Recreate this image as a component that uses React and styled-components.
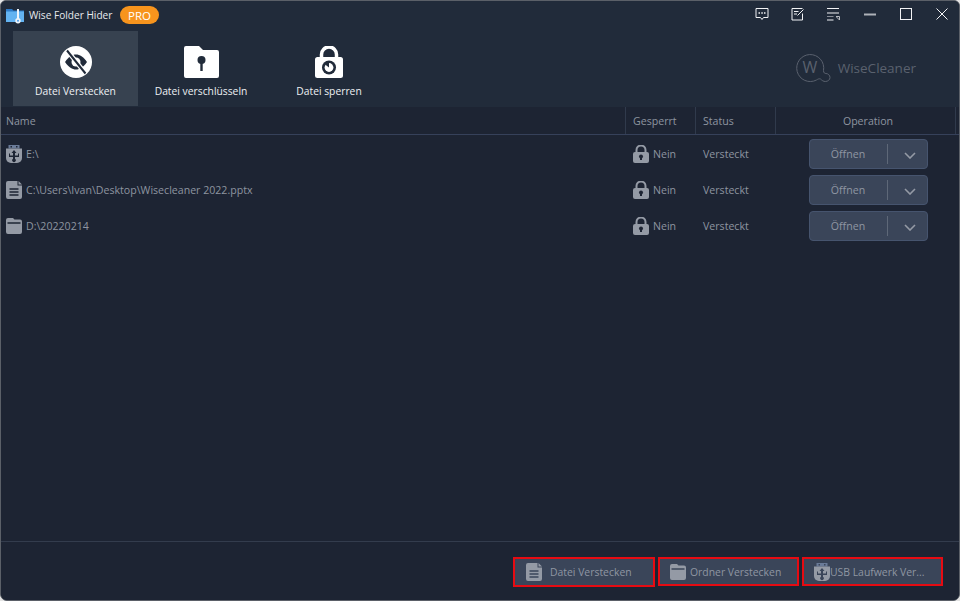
import React from "react";
import styled, { createGlobalStyle } from "styled-components";

const Global = createGlobalStyle`
  html, body { margin: 0; padding: 0; background: #e4e4e4; }
  * { box-sizing: border-box; }
  #root { width: 960px; height: 601px; }
`;

const Window = styled.div`
  width: 960px; height: 601px; display: flex; flex-direction: column;
  background: #1d2433; border: 1px solid #5b6068; border-radius: 6px 6px 7px 7px;
  overflow: hidden; font-family: "Open Sans", "Noto Sans", sans-serif; font-size: 10.6px; color: #8e95a0;
`;
const Header = styled.header`
  height: 106px; background: #212b3a; display: flex; flex-direction: column; flex: none;
`;
const TitleBar = styled.div`
  height: 30px; display: flex; align-items: flex-start; flex: none;
`;
const Brand = styled.div`
  display: flex; align-items: center; height: 28px; padding-left: 5px; flex: 1;
`;
const AppName = styled.span`
  color: #e8eaee; margin-left: 5px; white-space: nowrap; font-size: 10.1px; width: 83px;
`;
const ProBadge = styled.span`
  margin-left: 8px; width: 39px; height: 18px; border-radius: 9px; background: #f7941d; color: #fff;
  display: flex; align-items: center; justify-content: center; font-size: 11.5px;
`;
const Controls = styled.div`display: flex; margin-right: -1px;`;
const Control = styled.button`
  width: 36px; height: 26px; padding: 0; border: 0; background: none;
  display: flex; align-items: center; justify-content: center; color: #f2f3f5;
`;
const ToolRow = styled.div`
  display: flex; flex: 1; padding-left: 12px; align-items: stretch; padding-right: 43px;
`;
const Tool = styled.div`
  width: ${p => p.$w}px; height: 75px; display: flex; flex-direction: column; align-items: center;
  padding-top: 15px; color: #eef0f3; background: ${p => (p.$active ? "#374250" : "transparent")};
  white-space: nowrap;
`;
const ToolIconSlot = styled.div`height: 32px; display: flex; align-items: center;`;
const ToolLabel = styled.span`margin-top: 6px; line-height: 15px; font-size: 10.3px;`;
const Logo = styled.div`
  margin-left: auto; margin-top: 22px; display: flex; align-items: center; height: 30px; color: #5a616e;
`;
const LogoText = styled.span`font-size: 13.5px; margin-left: 7px;`;
const HeadRow = styled.div`
  display: flex; height: 28px; border-bottom: 1px solid #36415a; flex: none; background: #1d2433;
`;
const HeadCell = styled.div`
  width: ${p => p.$w}px; flex: ${p => (p.$w ? "none" : 1)}; display: flex; align-items: center;
  justify-content: ${p => (p.$center ? "center" : "flex-start")};
  padding-left: ${p => (p.$center ? 5 : p.$pad || 0)}px;
  border-right: ${p => (p.$noline ? "0" : "1px solid #303a4c")};
`;
const Rows = styled.div`flex: 1; padding-top: 1px;`;
const Row = styled.div`display: flex; height: 36px; align-items: center;`;
const NameCell = styled.div`
  width: 625px; flex: none; display: flex; align-items: center; padding-left: 5px; gap: 4px; white-space: pre;
`;
const LockCell = styled.div`
  width: 70px; flex: none; display: flex; align-items: center; padding-left: 7px; gap: 4px;
`;
const StatusCell = styled.div`width: 80px; flex: none; padding-left: 7px;`;
const OpCell = styled.div`flex: 1; padding-left: 33px;`;
const OpenButton = styled.div`
  width: 119px; height: 30px; border: 1px solid #46546e; border-radius: 4px; background: #3a4559;
  display: flex; align-items: center; color: #8f96a2;
`;
const OpenLabel = styled.span`width: 76px; text-align: center; flex: none; margin-top: -1px;`;
const OpenDivider = styled.span`width: 1px; height: 20px; background: #5e6878; flex: none; margin-left: 1px;`;
const OpenArrow = styled.span`flex: 1; display: flex; justify-content: center; padding: 3px 0 0 4px;`;
const Footer = styled.footer`
  height: 59px; flex: none; border-top: 1px solid #333c4d; display: flex; justify-content: flex-end;
  padding: 15px 16px 0 0; gap: 3px; background: #1d2433; font-size: 10.4px;
`;
const ActionButton = styled.div`
  width: ${p => p.$w}px; height: ${p => p.$h || 29}px; background: #3a4559; outline: 2px solid #e60b12; outline-offset: -2px;
  display: flex; align-items: center; padding-left: ${p => p.$pad}px; gap: ${p => p.$gap}px;
  color: #8f96a2; white-space: nowrap;
`;

const FeedbackIcon = () => (
  <svg width="14" height="14" viewBox="0 0 14 14" fill="none" stroke="currentColor">
    <path d="M1 1.500h12v9H8.500L7 12.500 5.500 10.500H1z" />
    <path d="M3.500 6h1.500M6.300 6h1.500M9 6h1.500" strokeWidth="1.500" />
  </svg>
);
const EditIcon = () => (
  <svg width="14" height="14" viewBox="0 0 14 14" fill="none" stroke="currentColor">
    <path d="M11.500 6.500v6.500h-10.500V1.500h10.500" />
    <path d="M3 4.500h4.500M3 7h3M6.500 8.500l6-6" />
  </svg>
);
const ListIcon = () => (
  <svg width="14" height="14" viewBox="0 0 14 14" fill="none" stroke="currentColor">
    <path d="M0 1.500h12M0 6h12M0 13h6.500" />
    <path d="M0 9.500h6.500" stroke="#8a8f98" />
    <path d="M9 9.500h3.500v3.500M9.500 10l3 3" stroke="#b8bcc2" />
  </svg>
);
const MinIcon = () => <svg width="12" height="3" viewBox="0 0 12 3"><rect y="0.500" width="12" height="2" fill="#aeb2b8" /></svg>;
const MaxIcon = () => (
  <svg width="12" height="12" viewBox="0 0 12 12" fill="none" stroke="currentColor"><rect x=".5" y=".5" width="11" height="11" /></svg>
);
const CloseIcon = () => (
  <svg width="12" height="12" viewBox="0 0 12 12" fill="none" stroke="currentColor"><path d="M.5.5l11 11M11.500.5l-11 11" /></svg>
);
const AppIcon = () => (
  <svg width="18" height="18" viewBox="0 0 18 18">
    <path d="M0 3h6l1.500 1.500H18V16H0z" fill="#2f7cc8" />
    <path d="M0 5.500h18V16H0z" fill="#63b3f1" />
    <rect x="11" y="3" width="2" height="10.500" fill="#eef4fa" />
    <circle cx="12" cy="14.800" r="2.700" fill="#eef4fa" />
    <circle cx="12" cy="14.800" r="1" fill="#4a9be6" />
  </svg>
);
const EyeTool = () => (
  <svg width="32" height="32" viewBox="0 0 32 32">
    <circle cx="16" cy="16" r="16" fill="#fff" />
    <path d="M5 16c4-5.500 7-7.500 11-7.500S23 10.500 27 16c-4 5.500-7 7.500-11 7.500S9 21.500 5 16z" fill="#212b3a" />
    <circle cx="16" cy="16" r="4.500" fill="#fff" />
    <path d="M8 5.500l17.500 22" stroke="#fff" strokeWidth="4.500" />
    <path d="M7 4.500l18.500 23" stroke="#212b3a" strokeWidth="2" />
  </svg>
);
const FolderTool = () => (
  <svg width="35" height="32" viewBox="0 0 35 32">
    <path d="M2 0h13l4 4h14a2 2 0 0 1 2 2v24a2 2 0 0 1-2 2H2a2 2 0 0 1-2-2V2a2 2 0 0 1 2-2z" fill="#fff" />
    <circle cx="17.500" cy="14" r="4" fill="#212b3a" />
    <rect x="16.300" y="15" width="2.400" height="10" fill="#212b3a" />
  </svg>
);
const LockTool = () => (
  <svg width="28" height="32" viewBox="0 0 28 32">
    <path d="M6.500 13V8.500a7.500 7.500 0 0 1 15 0V13" fill="none" stroke="#fff" strokeWidth="3.500" />
    <rect y="11" width="28" height="21" rx="2.500" fill="#fff" />
    <circle cx="14" cy="21.500" r="7" fill="#212b3a" />
    <circle cx="14" cy="21.500" r="4.400" fill="#fff" />
    <path d="M14 21.500l-4.500-3.500a6 6 0 0 1 4.500-1.800z" fill="#212b3a" />
  </svg>
);
const LogoMark = () => (
  <svg width="35" height="30" viewBox="0 0 35 30" fill="none" stroke="currentColor" strokeWidth="1">
    <path d="M27.500 17.500A13.500 13.500 0 1 0 20.500 27c1.500-1 2.500-1.500 4-1 1.500 1.500 3 2.500 4.800 2.500 2.700 0 4.700-1.800 4.700-4s-2-4-4-4c-1.200 0-2.500-.5-2.500-3z" />
    <text x="6.500" y="20" fontSize="16" fill="currentColor" stroke="none" fontFamily="Open Sans, sans-serif">W</text>
  </svg>
);
const UsbIcon = ({ bg = "#1d2433" }) => (
  <svg width="16" height="18" viewBox="0 0 16 18">
    <path d="M2.500 0h11v3.500h-11z" fill="#6a7b98" />
    <path d="M4.500 1h1.500v1.500H4.500zM10 1h1.500v1.500H10z" fill={bg} />
    <path d="M0 3.500h16v9.500a5 5 0 0 1-5 5H5a5 5 0 0 1-5-5z" fill="#949aa5" />
    <path d="M8 5l2.500 3h-1.500v2.500h3V8.500h1v3.500h-4v1.800a1.800 1.800 0 1 1-2 0V12h-4V8.500h1v2h3V8H5.500z" fill={bg} />
  </svg>
);
const FileIcon = ({ bg = "#1d2433" }) => (
  <svg width="16" height="18" viewBox="0 0 16 18">
    <path d="M2 0h9.500v4.500H16V16a2 2 0 0 1-2 2H2a2 2 0 0 1-2-2V2a2 2 0 0 1 2-2z" fill="#949aa5" />
    <path d="M12.500 0L16 3.500h-3.500z" fill="#949aa5" />
    <path d="M3.500 8h9M3.500 11h9M3.500 14h9" stroke={bg} strokeWidth="1.400" />
  </svg>
);
const FolderIcon = ({ bg = "#1d2433" }) => (
  <svg width="16" height="16" viewBox="0 0 16 16">
    <path d="M2 0h5l1.500 1.500H14a2 2 0 0 1 2 2V14a2 2 0 0 1-2 2H2a2 2 0 0 1-2-2V2a2 2 0 0 1 2-2z" fill="#949aa5" />
    <path d="M1.500 5h13" stroke={bg} strokeWidth="1.500" />
  </svg>
);
const LockIcon = () => (
  <svg width="16" height="18" viewBox="0 0 16 18">
    <path d="M3.500 8V5a4.500 4.500 0 0 1 9 0v3" fill="none" stroke="#949aa5" strokeWidth="2" />
    <rect y="7" width="16" height="11" rx="2" fill="#949aa5" />
    <circle cx="8" cy="11.500" r="2" fill="#1d2433" />
    <path d="M7 12h2v3H7z" fill="#1d2433" />
  </svg>
);
const Chevron = () => (
  <svg width="12" height="7" viewBox="0 0 12 7" fill="none" stroke="#949aa5" strokeWidth="1.600"><path d="M1 1l5 5 5-5" /></svg>
);

const rows = [
  { icon: <UsbIcon />, name: "E:\\" },
  { icon: <FileIcon />, name: "C:\\Users\\Ivan\\Desktop\\Wisecleaner 2022.pptx" },
  { icon: <FolderIcon />, name: "D:\\20220214" },
];

export default function App() {
  return (
    <Window>
      <Global />
      <Header>
        <TitleBar>
          <Brand>
            <AppIcon />
            <AppName>Wise Folder Hider</AppName>
            <ProBadge>PRO</ProBadge>
          </Brand>
          <Controls>
            <Control><FeedbackIcon /></Control>
            <Control><EditIcon /></Control>
            <Control><ListIcon /></Control>
            <Control><MinIcon /></Control>
            <Control><MaxIcon /></Control>
            <Control><CloseIcon /></Control>
          </Controls>
        </TitleBar>
        <ToolRow>
          <Tool $active $w={125}><ToolIconSlot><EyeTool /></ToolIconSlot><ToolLabel>Datei Verstecken</ToolLabel></Tool>
          <Tool $w={126}><ToolIconSlot><FolderTool /></ToolIconSlot><ToolLabel>Datei verschlüsseln</ToolLabel></Tool>
          <Tool $w={130}><ToolIconSlot><LockTool /></ToolIconSlot><ToolLabel>Datei sperren</ToolLabel></Tool>
          <Logo>
            <LogoMark />
            <LogoText>WiseCleaner</LogoText>
          </Logo>
        </ToolRow>
      </Header>
      <HeadRow>
        <HeadCell $w={625} $pad={5}>Name</HeadCell>
        <HeadCell $w={70} $pad={7}>Gesperrt</HeadCell>
        <HeadCell $w={80} $pad={7}>Status</HeadCell>
        <HeadCell $w={180} $center>Operation</HeadCell>
        <HeadCell $noline />
      </HeadRow>
      <Rows>
        {rows.map(r => (
          <Row key={r.name}>
            <NameCell>{r.icon}<span>{r.name}</span></NameCell>
            <LockCell><LockIcon /><span>Nein</span></LockCell>
            <StatusCell>Versteckt</StatusCell>
            <OpCell>
              <OpenButton>
                <OpenLabel>Öffnen</OpenLabel>
                <OpenDivider />
                <OpenArrow><Chevron /></OpenArrow>
              </OpenButton>
            </OpCell>
          </Row>
        ))}
      </Rows>
      <Footer>
        <ActionButton $w={142} $h={30} $pad={13} $gap={8}><FileIcon bg="#3a4559" />Datei Verstecken</ActionButton>
        <ActionButton $w={141} $pad={12} $gap={4}><FolderIcon bg="#3a4559" />Ordner Verstecken</ActionButton>
        <ActionButton $w={141} $pad={12} $gap={0}><UsbIcon bg="#3a4559" />USB Laufwerk Ver...</ActionButton>
      </Footer>
    </Window>
  );
}
